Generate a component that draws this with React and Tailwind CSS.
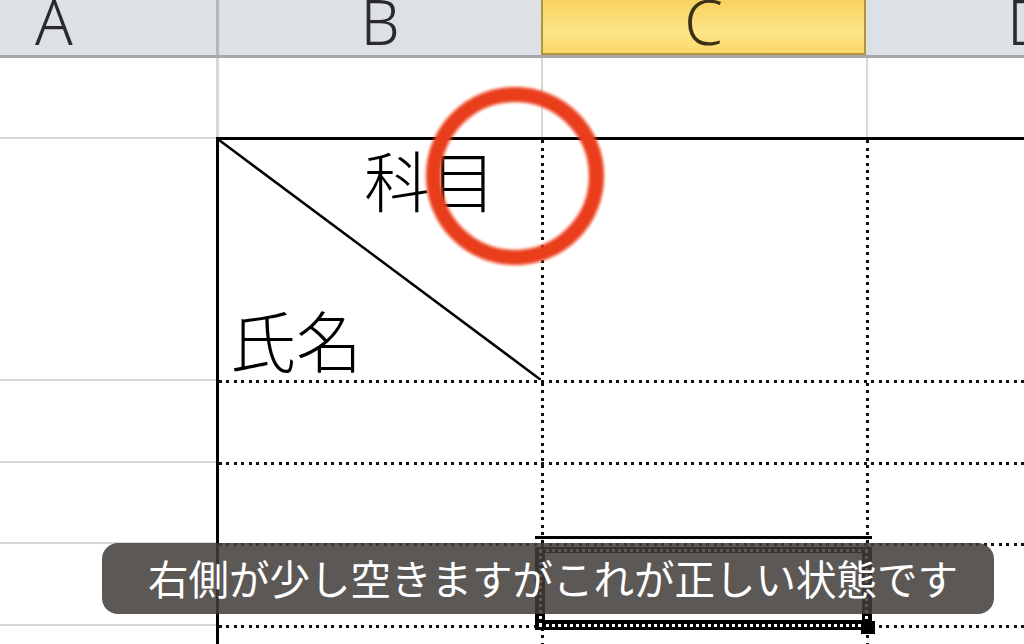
import React from 'react';

const dotH = 'h-[3px] w-full shrink-0 bg-[repeating-linear-gradient(90deg,#111_0_3px,transparent_3px_7.5px)]';
const dotV = 'w-[3px] self-stretch shrink-0 bg-[repeating-linear-gradient(180deg,#111_0_3px,transparent_3px_7.5px)]';
const jp = "font-['Noto_Sans_CJK_JP','Noto_Sans_CJK_SC',sans-serif]";

function ColHead({ label, className }) {
  return (
    <div className={`h-full flex justify-center ${className}`}>
      <span className="font-['Noto_Sans',sans-serif] font-light text-[62px] leading-[0.75] mt-[-2px]">{label}</span>
    </div>
  );
}

function TableRow({ h, children }) {
  return <div className={`flex shrink-0 ${h}`}>{children}</div>;
}

function SelectedCell() {
  // copied-cell marker around C5
  return (
    <div className="relative w-[322px] shrink-0">
      <div className="absolute left-[-9px] right-[-6px] top-[-10px] bottom-[-5px] border-t-[3px] border-black">
        <div className="absolute left-0 right-0 top-[8px] bottom-0 border-x-[10px] border-t-[6px] border-b-[10px] border-black">
          <div className="absolute left-[-6px] right-[-6px] top-[-4px] bottom-[-7px] border-[3px] border-dotted border-white" />
        </div>
        <div className="absolute right-[-3px] bottom-[-4px] w-[14px] h-[13px] bg-black" />
      </div>
    </div>
  );
}

export default function App() {
  return (
    <div className="relative w-[1024px] h-[644px] overflow-hidden bg-white">
      {/* column headers */}
      <div className="flex h-[58px] bg-[#dde1e6] border-b-[3px] border-[#a4a9af] text-[#2a2a2a]">
        <div className="w-[216px] shrink-0 h-full flex pl-[35px]">
          <span className="font-['Noto_Sans',sans-serif] font-light text-[62px] leading-[0.75] mt-[-2px]">A</span>
        </div>
        <ColHead label="B" className="w-[325px] shrink-0 border-l-[3px] border-[#b3b8be]" />
        <ColHead
          label="C"
          className="w-[325px] shrink-0 border-x-2 border-b-2 border-[#b2953a] mb-[-3px] h-[58px] bg-[linear-gradient(180deg,#f8d25e_0%,#fde58a_60%,#fcd86a_100%)] text-[#3b3117]"
        />
        <ColHead label="D" className="w-[326px] shrink-0" />
      </div>

      <div className="flex">
        {/* column A */}
        <div className="w-[216px] shrink-0 flex flex-col">
          <div className="h-[81px] border-b-2 border-[#d8d8d8]" />
          <div className="h-[242px] border-b-2 border-[#d8d8d8]" />
          <div className="h-[82px] border-b-2 border-[#d8d8d8]" />
          <div className="h-[81px] border-b-2 border-[#d8d8d8]" />
          <div className="h-[82px] border-b-2 border-[#d8d8d8]" />
          <div className="h-[60px]" />
        </div>

        <div className="flex-1 flex flex-col">
          {/* row 1 */}
          <div className="flex h-[79px] shrink-0">
            <div className="w-[325px] shrink-0 border-l-[3px] border-[#d8d8d8]" />
            <div className="w-[325px] shrink-0 border-l-2 border-[#d8d8d8]" />
            <div className="flex-1 border-l-2 border-[#d8d8d8]" />
          </div>

          {/* ruled table */}
          <div className="border-t-[3px] border-l-[3px] border-black flex flex-col">
            <TableRow h="h-[240px]">
              <div className={`relative w-[322px] shrink-0 flex flex-col justify-between pt-[5px] pb-[9px] ${jp} text-black text-[66px] font-light leading-none`}>
                <svg className="absolute inset-0" width="322" height="240" viewBox="0 0 322 240">
                  <line x1="0" y1="0" x2="322" y2="240" stroke="#000" strokeWidth="2.5" />
                </svg>
                <span className="relative pl-[145px]">科目</span>
                <span className="relative pl-[11px]">氏名</span>
              </div>
              <div className={dotV} />
              <div className="w-[322px] shrink-0" />
              <div className={dotV} />
              <div className="flex-1" />
            </TableRow>
            <div className={dotH} />
            <TableRow h="h-[79px]">
              <div className="w-[322px] shrink-0" />
              <div className={dotV} />
              <div className="w-[322px] shrink-0" />
              <div className={dotV} />
              <div className="flex-1" />
            </TableRow>
            <div className={dotH} />
            <TableRow h="h-[78px]">
              <div className="w-[322px] shrink-0" />
              <div className={dotV} />
              <div className="w-[322px] shrink-0" />
              <div className={dotV} />
              <div className="flex-1" />
            </TableRow>
            <div className={dotH} />
            <TableRow h="h-[79px]">
              <div className="w-[322px] shrink-0" />
              <div className={dotV} />
              <SelectedCell />
              <div className={dotV} />
              <div className="flex-1" />
            </TableRow>
            <div className={dotH} />
            <TableRow h="h-[40px]">
              <div className="w-[322px] shrink-0" />
              <div className={dotV} />
              <div className="w-[322px] shrink-0" />
              <div className={dotV} />
              <div className="flex-1" />
            </TableRow>
          </div>
        </div>
      </div>

      {/* red highlight ring */}
      <svg className="absolute left-[415px] top-[76px]" width="200" height="200" viewBox="0 0 200 200">
        <defs>
          <filter id="soft" x="-10%" y="-10%" width="120%" height="120%">
            <feGaussianBlur stdDeviation="1.3" />
          </filter>
        </defs>
        <circle cx="100" cy="100" r="81.5" fill="none" stroke="#ee4a28" strokeOpacity="0.55" strokeWidth="17" filter="url(#soft)" />
        <circle cx="100" cy="100" r="81.5" fill="none" stroke="#e93c1c" strokeWidth="13" filter="url(#soft)" />
      </svg>

      {/* caption */}
      <div className={`absolute left-[102px] top-[543px] w-[892px] h-[71px] rounded-[16px] bg-[rgba(64,60,58,0.86)] flex items-center justify-center pl-[10px] ${jp} text-white text-[40.5px] leading-none`}>
        右側が少し空きますがこれが正しい状態です
      </div>
    </div>
  );
}
